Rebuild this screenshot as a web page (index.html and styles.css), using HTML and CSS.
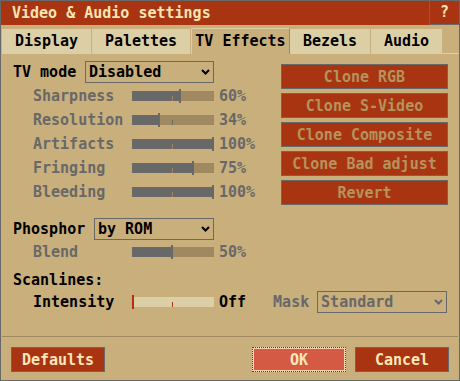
FILE: index.html
```html
<!DOCTYPE html>
<html>
<head>
<meta charset="utf-8">
<link rel="stylesheet" href="styles.css">
</head>
<body>
<div class="window">
  <div class="titlebar">
    <span class="title">Video &amp; Audio settings</span>
    <span class="help">?</span>
  </div>
  <div class="tabs">
    <div class="tab w-display">Display</div>
    <div class="tab w-palettes">Palettes</div>
    <div class="tab active w-tv">TV Effects</div>
    <div class="tab w-bezels">Bezels</div>
    <div class="tab w-audio">Audio</div>
    <div class="tab-fill"></div>
  </div>
  <div class="content">
    <div class="top">
      <div class="left">
        <div class="row sel-row">
          <span class="label w-tvmode">TV mode</span>
          <div class="select sel-tv"><span>Disabled</span><svg class="chev" width="9" height="6" viewBox="0 0 9 6"><polyline points="1,1 4.5,4.5 8,1" fill="none" stroke="#000" stroke-width="2"/></svg></div>
        </div>
        <div class="row slider-row dim">
          <span class="slabel">Sharpness</span>
          <div class="track"><span class="tick tick-on-fill"></span><div class="fill" style="width:49px"></div></div>
          <span class="val">60%</span>
        </div>
        <div class="row slider-row dim">
          <span class="slabel">Resolution</span>
          <div class="track"><span class="tick"></span><div class="fill" style="width:28px"></div></div>
          <span class="val">34%</span>
        </div>
        <div class="row slider-row dim">
          <span class="slabel">Artifacts</span>
          <div class="track"><span class="tick tick-on-fill"></span><div class="fill" style="width:82px"></div></div>
          <span class="val">100%</span>
        </div>
        <div class="row slider-row dim">
          <span class="slabel">Fringing</span>
          <div class="track"><span class="tick tick-on-fill"></span><div class="fill" style="width:62px"></div></div>
          <span class="val">75%</span>
        </div>
        <div class="row slider-row dim">
          <span class="slabel">Bleeding</span>
          <div class="track"><span class="tick tick-on-fill"></span><div class="fill" style="width:82px"></div></div>
          <span class="val">100%</span>
        </div>
      </div>
      <div class="right">
        <div class="btn dis">Clone RGB</div>
        <div class="btn dis">Clone S-Video</div>
        <div class="btn dis">Clone Composite</div>
        <div class="btn dis">Clone Bad adjust</div>
        <div class="btn dis">Revert</div>
      </div>
    </div>
    <div class="row sel-row phos">
      <span class="label w-phos">Phosphor</span>
      <div class="select sel-phos"><span>by ROM</span><svg class="chev" width="9" height="6" viewBox="0 0 9 6"><polyline points="1,1 4.5,4.5 8,1" fill="none" stroke="#000" stroke-width="2"/></svg></div>
    </div>
    <div class="row slider-row dim blend">
      <span class="slabel">Blend</span>
      <div class="track"><span class="tick"></span><div class="fill" style="width:41px"></div></div>
      <span class="val">50%</span>
    </div>
    <div class="row scan">
      <span class="label">Scanlines:</span>
    </div>
    <div class="row slider-row intensity">
      <span class="slabel">Intensity</span>
      <div class="track light"><span class="tick red"></span><div class="fill" style="width:2px"></div></div>
      <span class="val">Off</span>
      <span class="mask-label">Mask</span>
      <div class="select sel-mask dimsel"><span>Standard</span><svg class="chev" width="9" height="6" viewBox="0 0 9 6"><polyline points="1,1 4.5,4.5 8,1" fill="none" stroke="#686868" stroke-width="2"/></svg></div>
    </div>
  </div>
  <div class="footer">
    <div class="sep"></div>
    <div class="buttons">
      <div class="btn fbtn">Defaults</div>
      <div class="spacer"></div>
      <div class="btn fbtn ok">OK</div>
      <div class="btn fbtn">Cancel</div>
    </div>
  </div>
</div>
</body>
</html>
```
FILE: styles.css
```css
* { box-sizing: border-box; }
html, body { margin: 0; padding: 0; background: #c9af7c; }
body {
  font-family: "DejaVu Sans Mono", "Liberation Mono", monospace;
  font-weight: bold;
  font-size: 15px;
  color: #000;
}
.window {
  width: 460px;
  height: 381px;
  border: 1px solid #686868;
  background: #c9af7c;
  display: flex;
  flex-direction: column;
}
.titlebar {
  height: 24px;
  background: #a93412;
  display: flex;
  align-items: stretch;
  flex: none;
}
.title {
  flex: 1;
  color: #f6e4b2;
  padding-left: 11px;
  line-height: 24px;
}
.help {
  width: 30px;
  border-left: 1px solid #686868;
  border-bottom: 1px solid #686868;
  color: #f6e4b2;
  text-align: center;
  line-height: 23px;
}
.tabs {
  display: flex;
  align-items: flex-end;
  height: 26px;
  margin-top: 3px;
  padding-left: 1px;
  flex: none;
}
.tab {
  height: 25px;
  background: #dccfa5;
  text-align: center;
  line-height: 24px;
  margin-right: 1px;
}
.tab.active {
  height: 26px;
  background: #c9af7c;
  border-top: 1px solid #dccfa5;
  border-left: 1px solid #dccfa5;
  border-right: 1px solid #a08860;
  margin-right: 0;
  line-height: 24px;
}
.w-display { width: 89px; }
.w-palettes { width: 98px; }
.w-tv { width: 99px; }
.w-bezels { width: 80px; }
.w-audio { width: 71px; margin-right: 0; }
.tab-fill {
  flex: 1;
  height: 26px;
  border-bottom: 1px solid #dccfa5;
}
.content {
  padding-left: 12px;
  display: flex;
  flex-direction: column;
}
.top {
  display: flex;
  justify-content: space-between;
}
.left {
  padding-top: 7px;
  display: flex;
  flex-direction: column;
}
.right {
  padding-top: 10px;
  padding-right: 11px;
  display: flex;
  flex-direction: column;
  gap: 4px;
}
.row {
  display: flex;
  align-items: center;
}
.sel-row { height: 22px; margin-bottom: 1px; }
.label { line-height: 22px; }
.w-tvmode { width: 72px; }
.w-phos { width: 81px; }
.select {
  height: 22px;
  border: 1px solid #686868;
  display: flex;
  align-items: center;
  justify-content: space-between;
  padding-left: 3px;
  padding-right: 3px;
}
.sel-tv { width: 129px; }
.sel-phos { width: 120px; }
.sel-mask { width: 130px; }
.dimsel { color: #686868; }
.slider-row { height: 24px; }
.slabel { width: 99px; margin-left: 20px; }
.dim { color: #686868; }
.track {
  width: 82px;
  height: 10px;
  background: #a08860;
  position: relative;
  display: flex;
}
.track.light { background: #dccfa5; }
.fill {
  height: 10px;
  background: #686868;
  position: relative;
}
.fill::after {
  content: "";
  position: absolute;
  right: 0;
  top: -2px;
  width: 2px;
  height: 14px;
  background: #686868;
}
.light .fill { background: transparent; }
.light .fill::after { background: #b0300f; }
.tick {
  position: absolute;
  left: 40px;
  bottom: 0;
  width: 1px;
  height: 5px;
  background: #686868;
  z-index: 1;
}
.tick-on-fill { background: #a08860; }
.tick.red { background: #b0300f; }
.val { margin-left: 5px; }
.phos { margin-top: 13px; }
.blend { height: 22px; }
.scan { height: 22px; margin-top: 6px; }
.intensity { height: 22px; }
.mask-label { margin-left: 27px; width: 44px; color: #686868; }
.btn {
  height: 25px;
  border: 1px solid #686868;
  background: #a93412;
  display: flex;
  align-items: center;
  justify-content: center;
}
.right .btn { width: 167px; }
.btn.dis { color: #b5935c; }
.footer {
  margin-top: auto;
  height: 44px;
  flex: none;
}
.sep {
  height: 1px;
  background: #a08860;
  margin: 0 1px;
}
.buttons {
  display: flex;
  margin-top: 10px;
  padding-left: 10px;
  padding-right: 10px;
  gap: 9px;
}
.spacer { flex: 1; }
.fbtn {
  width: 94px;
  color: #fbe8bb;
}
.ok {
  background: #d55a43;
  border: 2px solid #f2d2b2;
  outline: 1px dotted #e00000;
  outline-offset: -1px;
}
```
